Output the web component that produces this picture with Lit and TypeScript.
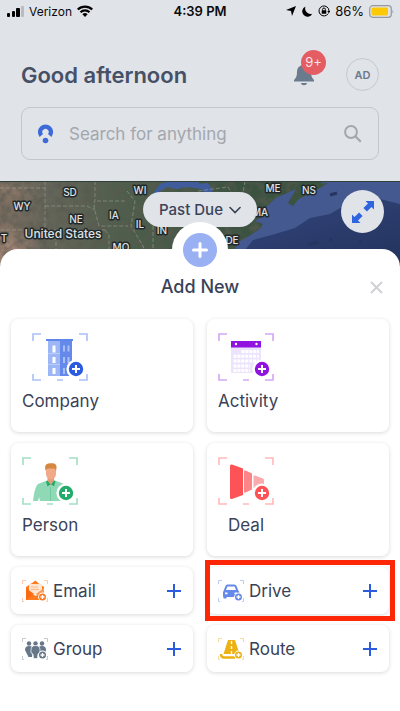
import { LitElement, html, svg, css } from "lit";
import { customElement } from "lit/decorators.js";

const brackets = (color: string) => svg`
  <path d="M1 8V1H9M47 1h8v7M55 41v6h-8M9 47H1v-6M25 47h6" fill="none" stroke=${color} stroke-width="1.6"/>`;

const addBadge = (color: string, x = 44, y = 36) => svg`
  <circle cx=${x} cy=${y} r="9.6" fill="#fff"/>
  <circle cx=${x} cy=${y} r="7.2" fill=${color}/>
  <path d=${`M${x - 4} ${y}h8M${x} ${y - 4}v8`} stroke="#fff" stroke-width="2"/>`;

const smallFrame = (color: string) => svg`
  <path d="M.5 4V.5H4M22 .5h3.500V4M25.500 18v3.500H24M2 21.500H.5V18" fill="none" stroke=${color} stroke-width="1"/>`;

const smallBadge = (color: string) => svg`
  <circle cx="20.500" cy="17" r="4.400" fill="#fff"/>
  <circle cx="20.500" cy="17" r="3.500" fill=${color}/>
  <path d="M18.500 17h4M20.500 15v4" stroke="#fff" stroke-width="1.300"/>`;

const companyArt = svg`${brackets("#a9c0f7")}
  <path d="M16 8h12v35H16z" fill="#9db6f5"/>
  <path d="M28 8h12v35H28z" fill="#6489ea"/>
  <path d="M14 6h27v2H14z" fill="#5f86ea"/>
  <path d="M16 20.500h12M16 31.500h12" stroke="#b9cbf9" stroke-width="1"/>
  <path d="M20.500 12.500h3v7h-3zM20.500 24h3v6h-3zM20.500 35h3v6h-3z" fill="#fff"/>
  <path d="M31 12.500h2v6h-2zM35.500 12.500h2v6h-2zM31 24h2v6h-2zM35.500 24h2v6h-2zM31 35h2v6h-2z" fill="#a9c0f7"/>
  ${addBadge("#2b5ce0")}`;

const activityArt = svg`${brackets("#d3a6f2")}
  <rect x="13" y="8" width="30" height="32" rx="1" fill="#ece4fc"/>
  <path d="M13 8h30v6.500H13z" fill="#9013e0"/>
  <circle cx="18" cy="11" r="1.200" fill="#fff"/><circle cx="38.500" cy="11" r="1.200" fill="#fff"/>
  <path d="M23.500 18.500h17.500" stroke="#fff" stroke-width="3" stroke-dasharray="3 .9"/>
  <path d="M15.500 23.300H41M15.500 28.100H41" stroke="#fff" stroke-width="3" stroke-dasharray="3 .9"/>
  <path d="M15.500 32.900H32M15.500 37.400H32" stroke="#fff" stroke-width="3" stroke-dasharray="3 .9"/>
  ${addBadge("#9013e0")}`;

const personArt = svg`${brackets("#a3dfc4")}
  <path d="M11 44c1-7 2-14 5-17l9-3.500h8l8 3c3 2 4 5 4.500 9V44H18l-1-4-1 4z" fill="#8fd9b6"/>
  <path d="M28.500 30v14" stroke="#6cc79c" stroke-width=".8"/>
  <path d="M25.500 19h6.500v5.500l-3.200 4-3.300-4z" fill="#e89d7a"/>
  <path d="M25.500 23.500l3.300 4.500 3.200-4.500 1.500 1-1.500 5-3.200-2.500-3.300 2.500-1.500-5z" fill="#22ab6b"/>
  <path d="M24 11h10v6c0 3-2.500 5.500-5 5.500s-5-2.500-5-5.500z" fill="#f0aa88"/>
  <path d="M23.500 14c-1-5 0-7 3-7.500 5-1 8.500 0 8 4l-.5 4c-.5-2-1-3-2-3h-6c-1.500 0-2 1-2.500 2.500z" fill="#d5873f"/>
  ${addBadge("#22ab6b")}`;

const dealArt = svg`${brackets("#ffb9bb")}
  <path d="M12 9q0-2 2-1.500l11 4V38l-11 4q-2 .5-2-1.500z" fill="#fd5357"/>
  <path d="M26 14.500q0-1.500 1.500-1l6.500 3v16l-6.500 3q-1.500.5-1.500-1z" fill="#fd8487"/>
  <path d="M35.500 19.500q0-1.500 1.500-1l8 3q1 .5 1 1.500v5l-10.500 3z" fill="#fdaaac"/>
  ${addBadge("#fd5357")}`;

const emailArt = svg`${smallFrame("#ffc9a6")}
  <path d="M4 7l9-6 9 6v13H4z" fill="#fd7a1f"/>
  <path d="M7 4h13v9l-6.500 3L7 12z" fill="#ffe4d0"/>
  <path d="M9 7h7M9 9.500h8" stroke="#fdb98a" stroke-width="1"/>
  <path d="M11 3l2.500-2.500L16 3z" fill="#fd7a1f"/>
  <path d="M4 8l8 6-8 6z" fill="#fb6a12"/><path d="M22 8l-8 6 8 5z" fill="#fd9a55"/>
  ${smallBadge("#fd7a1f")}`;

const groupArt = svg`${smallFrame("#c3c9d0")}
  <g fill="#66778a">
    <circle cx="7" cy="5.500" r="2.200"/><circle cx="13.500" cy="5.500" r="2.200"/><circle cx="20" cy="5.500" r="2.200"/>
    <path d="M3 12q0-4 4-4t4 3l-1 8H6.500zM16 11q0-3 4-3t4 4l-2 6h-4z"/>
  </g>
  <path d="M9 12q0-4.500 4.500-4.500T18 12v3l-2 1-.5 4.500h-4L11 16l-2-1z" fill="#66778a" stroke="#fff" stroke-width=".7"/>
  ${smallBadge("#66778a")}`;

const driveArt = svg`${smallFrame("#b9caf8")}
  <path fill-rule="evenodd" d="M5.500 11l2-5q.5-1.500 2-1.500h7q1.500 0 2 1.500l2 5q1 .5 1 2v3h-3l-3 1H8.500v1.500h-3V17.500q-.5-.5-.5-2v-3zM8 10h10l-1.400-3.600h-7.200zM7 12.500v1.700h2.500v-1.700zM16.500 12.500v1.700H19v-1.700z" fill="#6489ea"/>
  ${smallBadge("#6489ea")}`;

const routeArt = svg`${smallFrame("#f3dd9c")}
  <path d="M3 16q0 3.500 3 3.500h11" fill="none" stroke="#eeb112" stroke-width="2.500"/>
  <path d="M10 2h7l4.500 14H5.500z" fill="#eeb112"/>
  <path d="M13.500 3v3M13.500 8v3M13.500 13v3" stroke="#fff" stroke-width="1.400"/>
  ${smallBadge("#eeb112")}`;

const labels: [string, number, number][] = [
  ["SD", 70, 15], ["WI", 140, 13], ["WY", 22, 29], ["NE", 76, 42], ["IA", 114, 38],
  ["IL", 140, 47], ["IN", 162, 53], ["MO", 121, 70], ["ME", 273, 11], ["NS", 309, 13],
  ["MA", 260, 35], ["DE", 232, 63], ["T", 4, 61],
];

@customElement("map-view")
class MapView extends LitElement {
  static styles = css`
    :host { display: block; }
    svg { display: block; width: 100%; height: 100px; }
    .label { font: 500 10px Inter, sans-serif; fill: #dfe1e2; stroke: #23292b; stroke-width: 3px; stroke-linejoin: round; paint-order: stroke; text-anchor: middle; }
    .country { font-size: 12px; }
  `;
  render() {
    return html`<svg viewBox="0 0 400 100" preserveAspectRatio="xMidYMid slice" role="img" aria-label="Map">
      <defs>
        <linearGradient id="land"><stop offset="0" stop-color="#7d6e60"/><stop offset=".12" stop-color="#65655a"/><stop offset=".3" stop-color="#4f5e4c"/><stop offset=".6" stop-color="#3a5240"/></linearGradient>
        <linearGradient id="sea" x1="0" y1="0" x2=".6" y2="1"><stop offset="0" stop-color="#33457c"/><stop offset="1" stop-color="#24345f"/></linearGradient>
        <filter id="terrain" x="0" y="0" width="100%" height="100%">
          <feTurbulence type="fractalNoise" baseFrequency=".12" numOctaves="4" seed="7"/>
          <feColorMatrix values="0 0 0 0 .1  0 0 0 0 .1  0 0 0 0 .08  1.800 0 0 0 -.7"/>
        </filter>
        <radialGradient id="rock"><stop offset="0" stop-color="#b08d7c" stop-opacity=".9"/><stop offset="1" stop-color="#a98777" stop-opacity="0"/></radialGradient>
      </defs>
      <rect width="400" height="100" fill="url(#land)"/>
      <ellipse cx="8" cy="70" rx="34" ry="28" fill="url(#rock)"/>
      <ellipse cx="10" cy="12" rx="32" ry="12" fill="url(#rock)" opacity=".4"/>
      <rect width="300" height="100" filter="url(#terrain)"/>
      <path d="M154 11l6-8 10-3h28l3 8-14-2-10 2-10-2-8 5-3 12-4-2zM198 3l10-1 5 8-8 4z" fill="#405c9c"/>
      <path d="M400 0H325l-22 12-10 13-5-3 8-14-20 9-10 9-5 10-6 4 8 3-3 5-11 7-12 7-3 12-7 4-3 22H400z" fill="#44598f"/>
      <path d="M400 23L372 16l-20 4-22 13-20 4-15 10-20 6-22 6-12 15-6 26H400z" fill="url(#sea)"/>
      <path d="M330 14l7-2M308 64l10-3M322 70l4-2M330 60l2-3M359 61l3-1" stroke="#253660" stroke-width="3" fill="none"/>
      <path d="M293 16l10-8 12-5 13-1-15 9-14 7-5 4z" fill="#3d543c"/>
      <path d="M45 0v49M0 7h45M45 25h42l8 4M95 0v18l-1 8 5 19h29M97 20h30M0 49h105M56 49v32M105 49l4 5v30M127 10l8 10-4 25 12 20 6 18M153 45v24l-6 7M198 10l30-4 8 12h10M214 36h35M245 0l-5 30" fill="none" stroke="#a3a99b" stroke-opacity=".65" stroke-width=".8" stroke-dasharray="4 2"/>
      <rect width="400" height="1" fill="#30403a"/>
      ${labels.map(([t, x, y]) => svg`<text class="label" x=${x} y=${y}>${t}</text>`)}
      <text class="label country" x="63" y="57">United States</text>
    </svg>`;
  }
}

const tiles = [
  { label: "Company", art: companyArt, cls: "inset-art" },
  { label: "Activity", art: activityArt, cls: "" },
  { label: "Person", art: personArt, cls: "" },
  { label: "Deal", art: dealArt, cls: "inset-label" },
];
const rows = [
  { label: "Email", art: emailArt, marked: false },
  { label: "Drive", art: driveArt, marked: true },
  { label: "Group", art: groupArt, marked: false },
  { label: "Route", art: routeArt, marked: false },
];

@customElement("app-root")
class AppRoot extends LitElement {
  static styles = css`
    :host { display: flex; flex-direction: column; min-height: 100vh; background: #e0e3e8; color: #3a4258; font-family: Inter, sans-serif; overflow-x: hidden; }
    * { box-sizing: border-box; }
    svg { display: block; flex: none; }
    button { font: inherit; color: inherit; border: 0; padding: 0; margin: 0; background: none; cursor: pointer; }
    h1, h2 { margin: 0; }
    .status { display: grid; grid-template-columns: 1fr auto 1fr; align-items: center; height: 22px; padding: 0 6px; color: #0b0b0c; font-size: 13px; }
    .status > div { display: flex; align-items: center; gap: 5px; }
    .status .right { justify-content: flex-end; }
    .carrier { font-size: 12px; }
    .time { font-weight: 600; }
    .header { display: flex; align-items: center; height: 33px; margin: 36px 21px 16px; }
    h1 { flex: 1; font-size: 22px; line-height: 32px; font-weight: 600; color: #465066; }
    .bell { position: relative; margin-right: 31px; }
    .count { position: absolute; left: 8px; top: -13px; width: 25px; height: 25px; border-radius: 50%; background: #e35d63; color: #f3e4e8; font-size: 13px; line-height: 25px; text-align: center; }
    .avatar { width: 33px; height: 33px; border: 1px solid #c5c8ce; border-radius: 50%; font-size: 11px; font-weight: 600; color: #6c798b; }
    .search { display: flex; align-items: center; gap: 15px; height: 53px; margin: 0 21px 21px; padding: 0 16px 0 15px; border: 1px solid #c3c6cb; border-radius: 9px; }
    .search input { flex: 1; min-width: 0; border: 0; outline: 0; padding: 0; background: none; font: 400 17px Inter, sans-serif; color: #3a4258; }
    .search input::placeholder { color: #a3a7ad; opacity: 1; }
    .map { position: relative; }
    .filter { position: absolute; top: 11px; left: 50%; transform: translateX(-50%); display: flex; align-items: center; gap: 6px; height: 35px; padding: 0 16px; border-radius: 18px; background: #e0e3e8; font-size: 15px; font-weight: 500; white-space: nowrap; }
    .expand { position: absolute; top: 9px; right: 16px; width: 43px; height: 43px; border-radius: 50%; background: #e0e3e8; display: grid; place-items: center; }
    .sheet { position: relative; flex: 1; margin-top: -32px; padding: 26px 11px 20px; border-radius: 18px 18px 0 0; background: #fff; }
    .tab { position: absolute; top: -27px; left: 50%; transform: translateX(-50%); width: 56px; height: 56px; border-radius: 50%; background: #fff; display: grid; place-items: center; }
    .tab span { width: 34px; height: 34px; border-radius: 50%; background: #99b1f2; display: grid; place-items: center; }
    .title { position: relative; display: grid; grid-template-columns: 1fr auto 1fr; align-items: center; height: 24px; margin-bottom: 20px; }
    h2 { grid-column: 2; font-size: 18px; line-height: 24px; font-weight: 500; }
    .close { justify-self: end; margin-right: 6px; }
    .grid { display: grid; grid-template-columns: 1fr 1fr; gap: 11px 14px; }
    .card { position: relative; display: flex; border-radius: 8px; background: #fff; box-shadow: 0 1px 4px #00000026; font-size: 17px; line-height: 24px; text-align: left; }
    .tile { flex-direction: column; align-items: flex-start; gap: 8px; height: 113px; padding: 14px 11px; }
    .inset-art svg, .inset-label span { margin-left: 10px; }
    .row { align-items: center; gap: 5px; height: 47px; padding: 0 12px 0 11px; }
    .row span { flex: 1; }
    .marked::after { content: ""; position: absolute; inset: -7px -6px -7px -2px; border: 5px solid #fd2708; pointer-events: none; }
  `;

  render() {
    return html`
      <div class="status">
        <div>
          <svg width="18" height="12" viewBox="0 0 18 12"><rect x="1" y="8" width="3" height="4" rx="1"/><rect x="6" y="6" width="3" height="6" rx="1"/><rect x="10" y="3" width="4" height="9" rx="1"/><rect x="15" y="1" width="3" height="11" rx="1" fill="#b9bcc1"/></svg>
          <span class="carrier">Verizon</span>
          <svg width="16" height="12" viewBox="0 0 16 12"><g fill="none" stroke="#000" stroke-width="2.200"><path d="M.8 4.500a10.300 10.300 0 0 1 14.400 0M3.500 7.300a6.400 6.400 0 0 1 9 0"/></g><path d="M5.400 9.200a3.700 3.700 0 0 1 5.200 0L8 12z"/></svg>
        </div>
        <div class="time">4:39 PM</div>
        <div class="right">
          <svg width="10" height="10" viewBox="0 0 10 10"><path d="M10 0L6 10 5 5 0 4z"/></svg>
          <svg width="12" height="11" viewBox="0 0 12 11"><path d="M4.500.5a5.300 5.300 0 1 0 6.800 7.200A5.500 5.500 0 0 1 4.500.5z"/></svg>
          <svg width="12" height="12" viewBox="0 0 12 12"><path d="M10.300 8.500A5 5 0 1 1 11 6" fill="none" stroke="#000"/><path d="M9.200 6h3.200L10.800 8.200z"/><rect x="3.700" y="5.300" width="4.600" height="3.500" rx=".5"/><path d="M4.600 5.500V4.400a1.400 1.400 0 0 1 2.800 0v1.100" fill="none" stroke="#000"/></svg>
          <span>86%</span>
          <svg width="25" height="13" viewBox="0 0 25 13"><rect x=".7" y=".7" width="21.600" height="11.600" rx="3" fill="none" stroke="#96999f" stroke-width="1.200"/><rect x="2.500" y="2.500" width="16.500" height="8" rx="1.500" fill="#fdc905"/><path d="M23.500 4.500q1.500 2 0 4z" fill="#96999f"/></svg>
        </div>
      </div>
      <header class="header">
        <h1>Good afternoon</h1>
        <button class="bell" aria-label="Notifications">
          <svg width="22" height="24" viewBox="0 0 22 24"><path d="M11 2c4.500 0 7 3 7 7 0 4 1 6 3 8v1.500H1V17c2-2 3-4 3-8 0-4 2.500-7 7-7zM7.800 20h6.400a3.300 3 0 0 1-6.400 0z" fill="#6a7b8d"/></svg>
          <span class="count">9+</span>
        </button>
        <button class="avatar">AD</button>
      </header>
      <label class="search">
        <svg width="17" height="20" viewBox="0 0 17 20" aria-hidden="true"><path d="M4.300 11.500A5.400 5.400 0 1 1 12.700 11.500" fill="none" stroke="#3c6ad9" stroke-width="4.400"/><path d="M8.500 8l3 6h-6z" fill="#e0e3e8"/><circle cx="8.500" cy="16.500" r="2.800" fill="#3c6ad9"/></svg>
        <input type="text" placeholder="Search for anything" aria-label="Search for anything">
        <svg width="18" height="18" viewBox="0 0 18 18" aria-hidden="true"><circle cx="7" cy="7" r="5.900" fill="none" stroke="#a3a7ad" stroke-width="2"/><path d="M11.300 11.300l5.500 5.500" stroke="#a3a7ad" stroke-width="2.200"/></svg>
      </label>
      <div class="map">
        <map-view></map-view>
        <button class="filter">Past Due
          <svg width="12" height="8" viewBox="0 0 12 8"><path d="M1 1.500l5 5 5-5" fill="none" stroke="#3a4258" stroke-width="1.600" stroke-linecap="round"/></svg>
        </button>
        <button class="expand" aria-label="Expand map">
          <svg width="22" height="22" viewBox="0 0 22 22"><path d="M13.500 0H22v8.500l-2.500-2.500-4.600 4.600-3.500-3.500L16 2.500zM8.500 22H0v-8.500L2.500 16l4.600-4.600 3.500 3.500L6 19.500z" fill="#2f66df"/></svg>
        </button>
      </div>
      <main class="sheet">
        <button class="tab" aria-label="Add"><span><svg width="16" height="16" viewBox="0 0 16 16"><path d="M8 1.500v13M1.500 8h13" stroke="#fff" stroke-width="3" stroke-linecap="round"/></svg></span></button>
        <div class="title">
          <h2>Add New</h2>
          <button class="close" aria-label="Close"><svg width="13" height="13" viewBox="0 0 13 13"><path d="M1 1l11 11M12 1L1 12" stroke="#cfd1d4" stroke-width="2"/></svg></button>
        </div>
        <div class="grid">
          ${tiles.map((t) => html`<button class="card tile ${t.cls}"><svg width="56" height="48" viewBox="0 0 56 48">${t.art}</svg><span>${t.label}</span></button>`)}
          ${rows.map((r) => html`<button class="card row ${r.marked ? "marked" : ""}"><svg width="26" height="22" viewBox="0 0 26 22">${r.art}</svg><span>${r.label}</span><svg width="14" height="14" viewBox="0 0 14 14"><path d="M7 0v14M0 7h14" stroke="#2b5ce0" stroke-width="2"/></svg></button>`)}
        </div>
      </main>`;
  }
}
